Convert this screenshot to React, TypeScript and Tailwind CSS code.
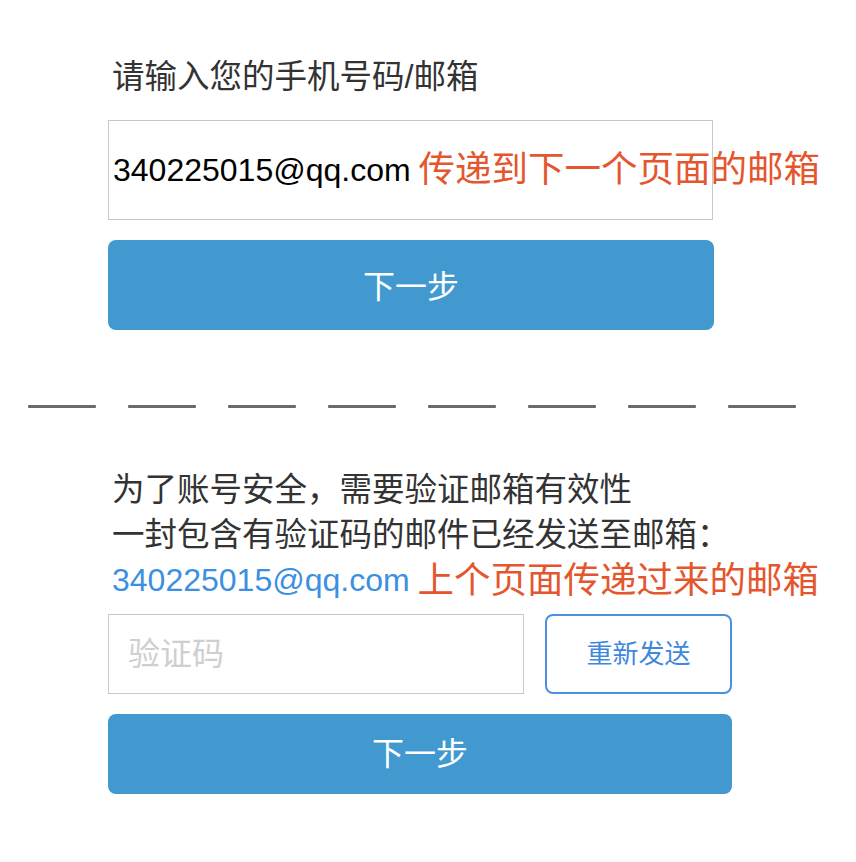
import React from "react";

const F = { fontFamily: '"Liberation Sans", "Noto Sans CJK SC", sans-serif' };

export default function App() {
  return (
    <div className="w-[856px] h-[862px] bg-white flex flex-col" style={F}>
      <div className="ml-[108px] mt-[57px] h-[40px] leading-[40px] pl-[4px] text-[32.5px] text-[#333]">
        请输入您的手机号码/邮箱
      </div>
      <div className="ml-[108px] mt-[23px] w-[605px] h-[100px] border border-[#c8c8c8] flex items-center pl-[4px] whitespace-nowrap overflow-visible">
        <span className="text-[32px] text-black leading-[40px]">340225015@qq.com</span>
        <span className="ml-[8px] text-[36.5px] text-[#e4572e] leading-[40px]">传递到下一个页面的邮箱</span>
      </div>
      <button className="ml-[108px] mt-[20px] w-[606px] h-[90px] rounded-[8px] bg-[#4299d0] text-white text-[32px] flex items-center justify-center pt-[3px]">
        下一步
      </button>
      <div className="ml-[28px] mt-[75px] flex gap-[32px]">
        {Array.from({ length: 8 }).map((_, i) => (
          <div key={i} className="w-[68px] h-[3px] bg-[#6a6a6a] rounded-[1px]" />
        ))}
      </div>
      <div className="ml-[108px] mt-[60px] pl-[4px] text-[32.5px] leading-[45px] text-[#333]">
        <div>为了账号安全，需要验证邮箱有效性</div>
        <div>一封包含有验证码的邮件已经发送至邮箱：</div>
        <div className="whitespace-nowrap flex items-center">
          <span className="text-[32px] text-[#3d8fe0]">340225015@qq.com</span>
          <span className="ml-[8px] text-[36.5px] text-[#e4572e]">上个页面传递过来的邮箱</span>
        </div>
      </div>
      <div className="ml-[108px] mt-[11px] flex gap-[21px]">
        <div className="w-[416px] h-[80px] border border-[#c8c8c8] flex items-center pl-[19px] text-[32px] text-[#cfcfcf]">
          验证码
        </div>
        <button className="w-[187px] h-[80px] rounded-[8px] border-2 border-[#4a90e2] text-[#3f88dc] text-[26px] flex items-center justify-center">
          重新发送
        </button>
      </div>
      <button className="ml-[108px] mt-[20px] w-[624px] h-[80px] rounded-[8px] bg-[#4299d0] text-white text-[32px] flex items-center justify-center">
        下一步
      </button>
    </div>
  );
}
